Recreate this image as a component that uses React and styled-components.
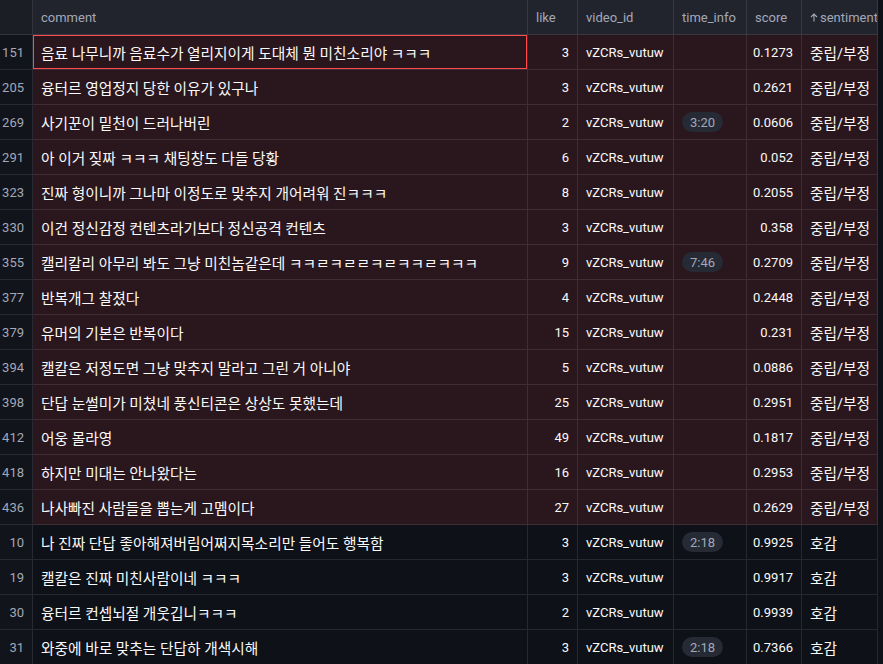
import React from "react";
import styled, { createGlobalStyle } from "styled-components";

const GlobalStyle = createGlobalStyle`
  html, body {
    margin: 0;
    padding: 0;
    background: #0e1117;
    overflow: hidden;
  }
  body {
    font-family: Roboto, "Noto Sans CJK KR", sans-serif;
  }
`;

const COLS = "33px 495px 50px 96px 73px 55px 76px";

const Grid = styled.div`
  width: 878px;
  display: flex;
  flex-direction: column;
`;

const Row = styled.div`
  display: grid;
  grid-template-columns: ${COLS};
  height: 35px;
  background: ${props => (props.negative ? "#2a171d" : "#0e1117")};
`;

const HeaderRow = styled(Row)`
  background: #22242d;
`;

const Cell = styled.div`
  box-sizing: border-box;
  height: 35px;
  display: flex;
  align-items: center;
  justify-content: ${props => (props.right ? "flex-end" : "flex-start")};
  padding: 0 8px;
  border-right: 1px solid rgba(250, 250, 250, 0.1);
  border-bottom: 1px solid rgba(250, 250, 250, 0.1);
  color: #fafafa;
  font-size: ${props => (props.latin ? "13px" : "14.7px")};
  white-space: nowrap;
  overflow: hidden;
  box-shadow: ${props => (props.selected ? "inset 0 0 0 1px #ff4b4b" : "none")};
`;

const IndexCell = styled(Cell)`
  background: #11141b;
  color: #a3a8b8;
  font-size: 13px;
  justify-content: flex-end;
`;

const HeadCell = styled(Cell)`
  color: #a3a8b8;
  font-size: 13px;
  gap: 2px;
  padding-right: 0;

  svg {
    flex-shrink: 0;
  }
`;

const IndexHead = styled(HeadCell)`
  background: #1c1e26;
`;

const Pill = styled.span`
  display: inline-flex;
  align-items: center;
  justify-content: center;
  width: 41px;
  height: 20px;
  border-radius: 10px;
  background: #262a34;
  color: #a3a8b8;
  font-size: 13px;
`;

const rows = [
  [151, "음료 나무니까 음료수가 열리지이게 도대체 뭔 미친소리야 ㅋㅋㅋ", 3, "", "0.1273", "중립/부정"],
  [205, "융터르 영업정지 당한 이유가 있구나", 3, "", "0.2621", "중립/부정"],
  [269, "사기꾼이 밑천이 드러나버린", 2, "3:20", "0.0606", "중립/부정"],
  [291, "아 이거 짖짜 ㅋㅋㅋ 채팅창도 다들 당황", 6, "", "0.052", "중립/부정"],
  [323, "진짜 형이니까 그나마 이정도로 맞추지 개어려워 진ㅋㅋㅋ", 8, "", "0.2055", "중립/부정"],
  [330, "이건 정신감정 컨텐츠라기보다 정신공격 컨텐츠", 3, "", "0.358", "중립/부정"],
  [355, "캘리칼리 아무리 봐도 그냥 미친놈같은데 ㅋㅋㄹㅋㄹㄹㅋㄹㅋㅋㄹㅋㅋㅋ", 9, "7:46", "0.2709", "중립/부정"],
  [377, "반복개그 찰졌다", 4, "", "0.2448", "중립/부정"],
  [379, "유머의 기본은 반복이다", 15, "", "0.231", "중립/부정"],
  [394, "캘칼은 저정도면 그냥 맞추지 말라고 그린 거 아니야", 5, "", "0.0886", "중립/부정"],
  [398, "단답 눈썰미가 미쳤네 풍신티콘은 상상도 못했는데", 25, "", "0.2951", "중립/부정"],
  [412, "어웅 몰라영", 49, "", "0.1817", "중립/부정"],
  [418, "하지만 미대는 안나왔다는", 16, "", "0.2953", "중립/부정"],
  [436, "나사빠진 사람들을 뽑는게 고멤이다", 27, "", "0.2629", "중립/부정"],
  [10, "나 진짜 단답 좋아해져버림어쩌지목소리만 들어도 행복함", 3, "2:18", "0.9925", "호감"],
  [19, "캘칼은 진짜 미친사람이네 ㅋㅋㅋ", 3, "", "0.9917", "호감"],
  [30, "융터르 컨셉뇌절 개웃깁니ㅋㅋㅋ", 2, "", "0.9939", "호감"],
  [31, "와중에 바로 맞추는 단답하 개색시해", 3, "2:18", "0.7366", "호감"],
];

function SortUp() {
  return (
    <svg width="8" height="10" viewBox="0 0 8 10" fill="none">
      <path d="M4 9.5V2M1 5L4 2L7 5" stroke="#a3a8b8" strokeWidth="1.1" />
    </svg>
  );
}

export default function App() {
  return (
    <>
      <GlobalStyle />
      <Grid>
        <HeaderRow>
          <IndexHead />
          <HeadCell>comment</HeadCell>
          <HeadCell>like</HeadCell>
          <HeadCell>video_id</HeadCell>
          <HeadCell>time_info</HeadCell>
          <HeadCell>score</HeadCell>
          <HeadCell>
            <SortUp />
            <span>sentiment</span>
          </HeadCell>
        </HeaderRow>
        {rows.map(([idx, comment, like, time, score, sentiment], i) => (
          <Row key={idx} negative={sentiment !== "호감"}>
            <IndexCell>{idx}</IndexCell>
            <Cell selected={i === 0}>{comment}</Cell>
            <Cell right latin>{like}</Cell>
            <Cell latin>vZCRs_vutuw</Cell>
            <Cell>{time && <Pill>{time}</Pill>}</Cell>
            <Cell right latin>{score}</Cell>
            <Cell>{sentiment}</Cell>
          </Row>
        ))}
      </Grid>
    </>
  );
}
